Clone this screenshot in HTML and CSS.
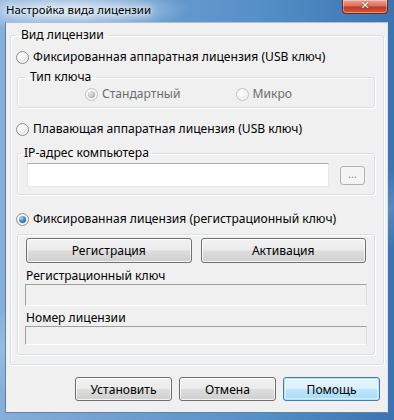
FILE: index.html
```html
<!DOCTYPE html>
<html lang="ru">
<head>
<meta charset="utf-8">
<title>Настройка вида лицензии</title>
<link rel="stylesheet" href="styles.css">
</head>
<body>
<div class="window">
  <div class="titlebar">
    <span class="title">Настройка вида лицензии</span>
    <span class="close"><span class="x">✕</span></span>
  </div>
  <div class="client">
    <fieldset class="group group-main">
      <legend>Вид лицензии</legend>
      <label class="opt opt-top"><span class="radio"></span><span>Фиксированная аппаратная лицензия (USB ключ)</span></label>
      <fieldset class="group group-sub group-type">
        <legend>Тип ключа</legend>
        <div class="type-row">
          <label class="opt disabled"><span class="radio checked"></span><span>Стандартный</span></label>
          <label class="opt disabled opt-micro"><span class="radio"></span><span>Микро</span></label>
        </div>
      </fieldset>
      <label class="opt opt-float"><span class="radio"></span><span>Плавающая аппаратная лицензия (USB ключ)</span></label>
      <fieldset class="group group-sub group-ip">
        <legend>IP-адрес компьютера</legend>
        <div class="ip-row">
          <span class="edit"></span>
          <span class="btn btn-dots">...</span>
        </div>
      </fieldset>
      <label class="opt opt-reg"><span class="radio checked"></span><span>Фиксированная лицензия (регистрационный ключ)</span></label>
      <fieldset class="group group-sub group-keys">
        <div class="btn-row">
          <span class="btn btn-wide">Регистрация</span>
          <span class="btn btn-wide">Активация</span>
        </div>
        <div class="field-label">Регистрационный ключ</div>
        <span class="edit edit-disabled edit-key"></span>
        <div class="field-label field-label-2">Номер лицензии</div>
        <span class="edit edit-disabled edit-num"></span>
      </fieldset>
    </fieldset>
    <div class="footer">
      <span class="btn btn-foot">Установить</span>
      <span class="btn btn-foot">Отмена</span>
      <span class="btn btn-foot btn-default">Помощь</span>
    </div>
  </div>
</div>
</body>
</html>
```

FILE: styles.css
```css
* { box-sizing: border-box; }
html, body { margin: 0; padding: 0; }
body {
  width: 394px;
  height: 420px;
  overflow: hidden;
  font-family: "Noto Sans", "Open Sans", sans-serif;
  font-size: 12.1px;
  color: #000;
}
.window {
  width: 394px;
  height: 420px;
  display: flex;
  flex-direction: column;
  background:
    radial-gradient(ellipse 120px 22px at 70px 10px, rgba(230,240,250,0.85), rgba(230,240,250,0) 100%),
    linear-gradient(160deg, rgba(255,255,255,0) 55%, rgba(255,255,255,0.15) 62%, rgba(255,255,255,0) 70%),
    linear-gradient(to right, #86afd9 0%, #6f9fd0 30%, #5690c8 65%, #3b74b0 100%);
}
.titlebar {
  height: 22px;
  display: flex;
  align-items: flex-start;
}
.title {
  margin-left: 6px;
  line-height: 20px;
  font-size: 11.4px;
  color: #000;
  text-shadow: 0 0 6px #fff, 0 0 10px #fff, 0 0 14px rgba(255,255,255,0.9);
}
.close {
  margin-left: auto;
  margin-right: 6px;
  width: 46px;
  height: 14px;
  border: 1px solid #6b2b22;
  border-top: 0;
  border-radius: 0 0 4px 4px;
  background: linear-gradient(#e9a497 0%, #d9705e 45%, #c2391f 55%, #d2593f 100%);
  box-shadow: inset 0 0 0 1px rgba(255,255,255,0.35);
  display: flex;
  justify-content: center;
  align-items: flex-start;
}
.x {
  color: #fff;
  font-family: "DejaVu Sans", sans-serif;
  font-size: 11px;
  font-weight: bold;
  line-height: 11px;
  text-shadow: 0 0 2px #5a1a10;
}
.client {
  flex: 1;
  margin: 0 6px 7px 5px;
  background: #f0f0f0;
  border: 1px solid #5f83ab;
  border-top-color: #a9c0d8;
  border-right-color: #d9e4ef;
  display: flex;
  flex-direction: column;
}
.group {
  border: 1px solid #d5dfe5;
  border-radius: 3px;
  box-shadow: inset 1px 1px 0 #fff, 1px 1px 0 #fff;
  margin: 0;
  min-width: 0;
}
.group > legend {
  padding: 0 5px;
  line-height: 16px;
  height: 16px;
}
.group-main {
  margin: 4px 3px 0 4px;
  padding: 0 8px 9px 5px;
}
.opt {
  display: flex;
  align-items: center;
  height: 16px;
  line-height: 16px;
  white-space: nowrap;
}
.opt .radio { margin-right: 4px; flex: none; }
.opt-top { margin-top: 6px; }
.opt-float { margin-top: 13px; }
.opt-reg { margin-top: 16px; }
.group-sub {
  margin-left: 1px;
}
.group-type {
  margin-top: 4px;
  padding: 0 0 5px 7px;
}
.type-row {
  display: flex;
  margin-top: 1px;
  padding-left: 60px;
}
.opt-micro { margin-left: 55px; }
.disabled { color: #6d6d6d; }
.group-ip {
  margin-top: 8px;
  padding: 0 8px 7px 9px;
}
.group-ip > legend { padding: 0 3px; margin-left: -6px; }
.ip-row {
  display: flex;
  align-items: center;
  margin-top: 2px;
  gap: 11px;
}
.edit {
  display: block;
  background: #fff;
  border: 1px solid #abadb3;
  border-color: #abadb3 #e3e9ef #e3e9ef #e2e3ea;
  height: 24px;
}
.ip-row .edit { width: 302px; }
.btn {
  display: flex;
  align-items: center;
  justify-content: center;
  border: 1px solid #707070;
  border-radius: 3px;
  background: linear-gradient(#f2f2f2 0%, #ebebeb 48%, #dddddd 52%, #cfcfcf 100%);
  box-shadow: inset 0 0 0 1px rgba(255,255,255,0.75);
  white-space: nowrap;
}
.btn-dots {
  width: 25px;
  height: 19px;
  border-color: #adb2b5;
  background: #f4f4f4;
  color: #8a8a8a;
  box-shadow: none;
  font-size: 11px;
  line-height: 10px;
  padding-bottom: 2px;
}
.group-keys {
  margin-top: 7px;
  padding: 3px 8px 9px 8px;
}
.btn-row {
  display: flex;
  gap: 9px;
}
.btn-wide {
  flex: 1;
  height: 25px;
}
.field-label {
  margin-top: 5px;
  height: 16px;
  line-height: 16px;
}
.field-label-2 { margin-top: 4px; }
.edit-disabled {
  background: #f0f0f0;
  border-color: #a0a0a0 #dadada #ffffff #a0a0a0;
}
.edit-key { height: 22px; margin-left: -1px; margin-right: -1px; }
.edit-num { height: 19px; margin-left: -1px; margin-right: -1px; }
.footer {
  display: flex;
  justify-content: flex-end;
  gap: 7px;
  margin-top: 12px;
  padding-right: 7px;
}
.btn-foot {
  width: 97px;
  height: 24px;
}
.btn-default {
  border-color: #3c7fb1;
  box-shadow: inset 0 0 0 1px #b6e2f8, inset 0 0 0 2px rgba(255,255,255,0.5);
  background: linear-gradient(#eaf6fd 0%, #d9f0fc 48%, #bee6fd 52%, #a7d9f5 100%);
}
.radio {
  width: 13px;
  height: 13px;
  border-radius: 50%;
  border: 1px solid #8e8f8f;
  background: radial-gradient(circle at 35% 35%, #ffffff 0%, #f4f4f4 40%, #cfcfcf 100%);
  box-shadow: inset 0 0 0 1px #f7f7f7;
  display: flex;
  align-items: center;
  justify-content: center;
}
.radio.checked::after {
  content: "";
  width: 7px;
  height: 7px;
  border-radius: 50%;
  background: radial-gradient(circle at 35% 30%, #a8e3ff 0%, #3f8fd2 45%, #14467f 100%);
}
.disabled .radio {
  border-color: #c0c0c0;
  background: radial-gradient(circle at 35% 35%, #fff 0%, #f2f2f2 50%, #e0e0e0 100%);
}
.disabled .radio.checked::after {
  background: radial-gradient(circle at 35% 30%, #e8e8e8 0%, #bdbdbd 60%, #9a9a9a 100%);
}
```
